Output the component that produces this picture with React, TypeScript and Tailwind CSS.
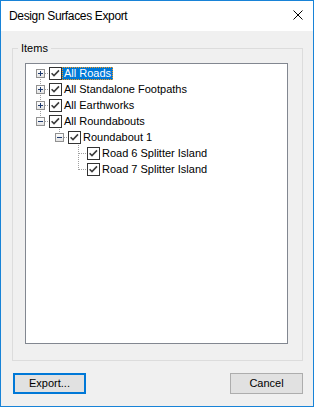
import React from 'react';

type VLine = 'none' | 'full' | 'top' | 'bottom';

interface Cell {
  v: VLine;
  h?: boolean;
  box?: 'plus' | 'minus';
}

interface Row {
  label: string;
  cells: Cell[];
  selected?: boolean;
}

const DOT = '#a0a0a0';

const rows: Row[] = [
  { label: 'All Roads', cells: [{ v: 'bottom', h: true, box: 'plus' }], selected: true },
  { label: 'All Standalone Footpaths', cells: [{ v: 'full', h: true, box: 'plus' }] },
  { label: 'All Earthworks', cells: [{ v: 'full', h: true, box: 'plus' }] },
  { label: 'All Roundabouts', cells: [{ v: 'top', h: true, box: 'minus' }] },
  { label: 'Roundabout 1', cells: [{ v: 'none' }, { v: 'top', h: true, box: 'minus' }] },
  { label: 'Road 6 Splitter Island', cells: [{ v: 'none' }, { v: 'none' }, { v: 'full', h: true }] },
  { label: 'Road 7 Splitter Island', cells: [{ v: 'none' }, { v: 'none' }, { v: 'top', h: true }] },
];

// one 19x16 indent slot of the tree: connector dots and the +/- box
function TreeCell({ cell }: { cell: Cell }) {
  const x = 10.5;
  const y = 8.5;
  let y1 = 0;
  let y2 = 0;
  if (cell.v === 'full') { y1 = 0; y2 = 16; }
  if (cell.v === 'top') { y1 = 0; y2 = 9; }
  if (cell.v === 'bottom') { y1 = 8; y2 = 16; }

  return (
    <svg width="19" height="16" viewBox="0 0 19 16" className="shrink-0" shapeRendering="crispEdges">
      {cell.v !== 'none' && (
        <line x1={x} y1={y1} x2={x} y2={y2} stroke={DOT} strokeWidth="1" strokeDasharray="1 1" />
      )}
      {cell.h && (
        <line x1={cell.box ? 15 : 11} y1={y} x2={19} y2={y} stroke={DOT} strokeWidth="1" strokeDasharray="1 1" />
      )}
      {cell.box && (
        <g>
          <defs>
            <linearGradient id="tvbox" x1="0" y1="0" x2="0" y2="1">
              <stop offset="0" stopColor="#ffffff" />
              <stop offset="1" stopColor="#e2e2e2" />
            </linearGradient>
          </defs>
          <rect x="6.5" y="4.5" width="8" height="8" fill="url(#tvbox)" stroke="#919191" />
          <line x1="8" y1={y} x2="13" y2={y} stroke="#1e3a6e" />
          {cell.box === 'plus' && <line x1={x} y1="6" x2={x} y2="11" stroke="#1e3a6e" />}
        </g>
      )}
    </svg>
  );
}

function CheckBox() {
  return (
    <svg width="13" height="13" viewBox="0 0 13 13" className="mt-[2px] shrink-0">
      <rect x="0.5" y="0.5" width="12" height="12" fill="#ffffff" stroke="#333333" />
      <polyline points="2.6,6.2 5,8.6 10,3.4" fill="none" stroke="#3c3c3c" strokeWidth="1.6" />
    </svg>
  );
}

function TreeRow({ row }: { row: Row }) {
  return (
    <div className="flex h-[16px] items-start">
      {row.cells.map((c, i) => (
        <TreeCell key={i} cell={c} />
      ))}
      <CheckBox />
      <span
        className={
          row.selected
            ? 'mt-[2px] h-[13px] border border-dotted border-[#f59a1b] bg-[#0078d7] px-[1px] text-[11px] leading-[11px] text-white whitespace-nowrap'
            : 'mt-[2px] h-[13px] px-[2px] text-[11px] leading-[13px] text-black whitespace-nowrap'
        }
      >
        {row.label}
      </span>
    </div>
  );
}

export default function App() {
  return (
    <div
      className="flex h-[407px] w-[314px] flex-col border border-[#1883d7] bg-[#f0f0f0] text-black"
      style={{ fontFamily: '"Liberation Sans", Arial, sans-serif' }}
    >
      {/* title bar */}
      <div className="flex h-[30px] shrink-0 items-center justify-between bg-white pl-[8px] pr-[10px]">
        <span className="text-[12px] tracking-[-0.35px] leading-[14px]">Design Surfaces Export</span>
        <svg width="10" height="10" viewBox="0 0 10 10" className="mb-[2px]">
          <path d="M0.5 0.5 L9.5 9.5 M9.5 0.5 L0.5 9.5" stroke="#000" strokeWidth="1" fill="none" />
        </svg>
      </div>

      {/* Items group */}
      <fieldset className="ml-[11px] mr-[10px] mt-[11px] h-[319px] border border-[#dcdcdc]">
        <legend className="ml-[5px] px-[3px] text-[11px] leading-[13px]">Items</legend>
        <div className="ml-[12px] mt-[8px] h-[281px] w-[263px] border border-[#828790] bg-white pl-[4px] pt-[1px]">
          {rows.map((r) => (
            <TreeRow key={r.label} row={r} />
          ))}
        </div>
      </fieldset>

      {/* buttons */}
      <div className="mt-[12px] flex justify-between pl-[12px] pr-[10px]">
        <button className="h-[21px] w-[73px] border-2 border-[#0078d7] bg-[#e1e1e1] text-[11px] leading-[13px]">
          Export...
        </button>
        <button className="h-[21px] w-[73px] border border-[#adadad] bg-[#e1e1e1] text-[11px] leading-[13px]">
          Cancel
        </button>
      </div>
    </div>
  );
}
